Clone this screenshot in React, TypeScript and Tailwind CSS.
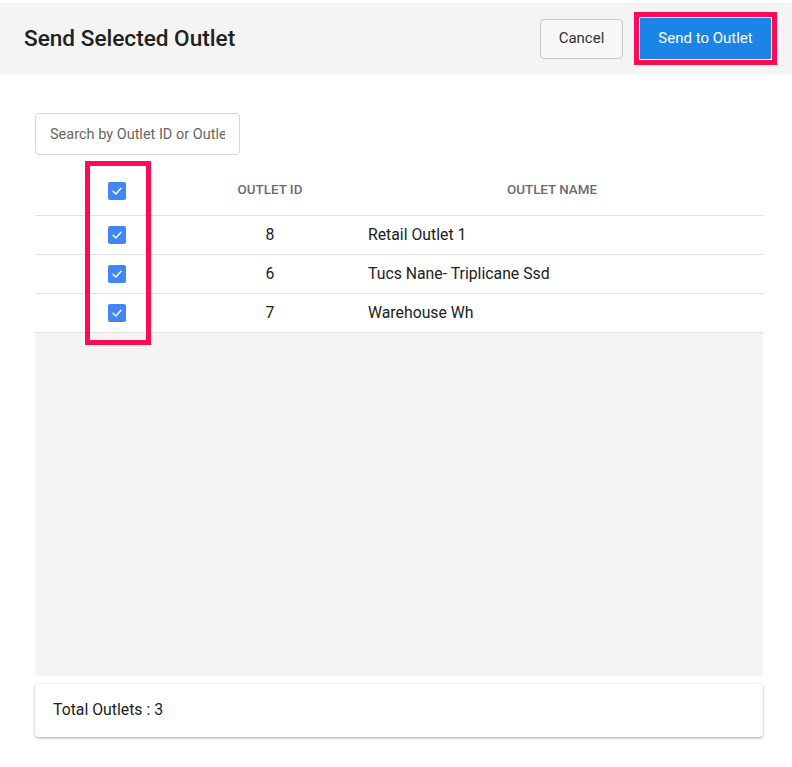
import React from 'react';

const outlets = [
  { id: '8', name: 'Retail Outlet 1' },
  { id: '6', name: 'Tucs Nane- Triplicane Ssd' },
  { id: '7', name: 'Warehouse Wh' },
];

const Check = () => (
  <span className="inline-flex w-[18px] h-[18px] rounded-[2px] bg-[#4285f4] items-center justify-center">
    <svg width="12" height="12" viewBox="0 0 12 12" fill="none">
      <path d="M2 6.2 L4.8 9 L10 3.2" stroke="white" strokeWidth="1.4" strokeLinecap="round" strokeLinejoin="round" />
    </svg>
  </span>
);

const App = () => {
  return (
    <div className="w-[792px] h-[767px] bg-white pt-[3px] font-['Roboto',sans-serif] text-[#212121]">
      <div className="h-[71px] bg-[#f4f4f4] flex items-center justify-between pl-6 pr-[15px]">
        <h1 className="text-[22.6px] font-medium">Send Selected Outlet</h1>
        <div className="flex items-center gap-[11px]">
          <button className="h-[40px] w-[83px] border border-[#c8c8c8] rounded-[4px] bg-[#f7f7f7] text-[15px] text-[#333]">
            Cancel
          </button>
          <div className="border-[5px] border-[#ff0a55] p-[1px]">
            <button className="h-[41px] w-[131px] bg-[#1a84e7] rounded-[1px] text-white text-[15px]">
              Send to Outlet
            </button>
          </div>
        </div>
      </div>

      <div className="pl-[35px] pr-[29px] pt-[39px] relative">
        <input
          placeholder="Search by Outlet ID or Outlet Name"
          className="w-[205px] h-[42px] border border-[#d6d6d6] rounded-[4px] px-[14px] text-[14.5px] text-[#333] placeholder:text-[#666] outline-none"
        />

        <table className="w-full mt-[10px] border-collapse">
          <thead>
            <tr className="h-[50px] border-b border-[#e0e0e0]">
              <th className="w-[164px] text-center font-normal"><span className="inline-flex align-middle"><Check /></span></th>
              <th className="w-[142px] text-center text-[13.4px] font-medium text-[#6b6b6b]">OUTLET ID</th>
              <th className="text-center text-[13.4px] font-medium text-[#6b6b6b]">OUTLET NAME</th>
            </tr>
          </thead>
          <tbody>
            {outlets.map((o) => (
              <tr key={o.id} className="h-[39px] border-b border-[#e0e0e0] text-[15.8px]">
                <td className="text-center"><span className="inline-flex align-middle"><Check /></span></td>
                <td className="text-center">{o.id}</td>
                <td className="pl-[27px]">{o.name}</td>
              </tr>
            ))}
          </tbody>
        </table>

        <div className="h-[343px] bg-[#f4f4f4]" />

        <div className="mt-[8px] h-[53px] bg-white rounded-[4px] shadow-[0_1px_3px_rgba(0,0,0,0.35)] flex items-center px-[18px] text-[15.8px]">
          Total Outlets : 3
        </div>

        <div className="absolute left-[85px] top-[87px] w-[66px] h-[184px] border-[5px] border-[#ff0a55] pointer-events-none" />
      </div>
    </div>
  );
};

export default App;
